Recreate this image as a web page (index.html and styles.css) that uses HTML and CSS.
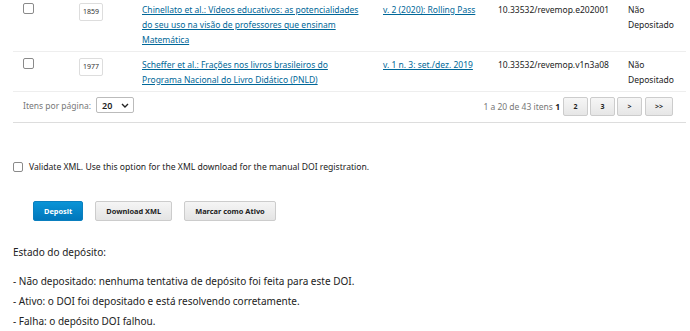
FILE: index.html
```html
<!DOCTYPE html>
<html lang="pt-BR">
<head>
    <meta charset="UTF-8">
    <meta name="viewport" content="width=device-width, initial-scale=1.0">
    <title>DOI</title>
    <link rel="stylesheet" href="styles.css">
</head>
<body>

    <div class="panel">
        <!-- Submissions list -->
        <table class="doi-table">
            <colgroup>
                <col class="c-check">
                <col class="c-id">
                <col class="c-title">
                <col class="c-issue">
                <col class="c-doi">
                <col class="c-status">
            </colgroup>
            <tbody>
                <tr>
                    <td><span class="box"></span></td>
                    <td><span class="sub-id">1859</span></td>
                    <td><a href="#">Chinellato et al.: Vídeos educativos: as potencialidades do seu uso na visão de professores que ensinam Matemática</a></td>
                    <td><a href="#">v. 2 (2020): Rolling Pass</a></td>
                    <td>10.33532/revemop.e202001</td>
                    <td>Não Depositado</td>
                </tr>
                <tr>
                    <td><span class="box"></span></td>
                    <td><span class="sub-id">1977</span></td>
                    <td><a href="#">Scheffer et al.: Frações nos livros brasileiros do Programa Nacional do Livro Didático (PNLD)</a></td>
                    <td><a href="#">v. 1 n. 3: set./dez. 2019</a></td>
                    <td>10.33532/revemop.v1n3a08</td>
                    <td>Não Depositado</td>
                </tr>
            </tbody>
        </table>

        <div class="list-footer">
            <div class="per-page">
                <span>Itens por página:</span>
                <span class="select">20 <svg width="8" height="5" viewBox="0 0 8 5"><path d="M1 1l3 3 3-3" fill="none" stroke="#222" stroke-width="1.4"/></svg></span>
            </div>
            <div class="pager">
                <span class="count">1 a 20 de 43 itens <b>1</b></span>
                <span class="pg">2</span>
                <span class="pg">3</span>
                <span class="pg">&gt;</span>
                <span class="pg">&gt;&gt;</span>
            </div>
        </div>
    </div>

    <!-- XML validation -->
    <label class="validate"><span class="box"></span> Validate XML. Use this option for the XML download for the manual DOI registration.</label>

    <div class="actions">
        <button class="btn primary">Deposit</button>
        <button class="btn">Download XML</button>
        <button class="btn">Marcar como Ativo</button>
    </div>

    <div class="legend">
        <p class="legend-title">Estado do depósito:</p>
        <p>- Não depositado: nenhuma tentativa de depósito foi feita para este DOI.</p>
        <p>- Ativo: o DOI foi depositado e está resolvendo corretamente.</p>
        <p>- Falha: o depósito DOI falhou.</p>
    </div>

</body>
</html>
```

FILE: styles.css
```css
* {
    margin: 0;
    padding: 0;
    box-sizing: border-box;
}

body {
    font-family: 'Noto Sans', sans-serif;
    font-size: 10px;
    color: #222;
    background: #fff;
    padding: 0 4px 0 13px;
    overflow: hidden;
}

.panel {
    margin-top: -3px;
    border-bottom: 1px solid #ddd;
}

.doi-table {
    width: 100%;
    border-collapse: collapse;
    table-layout: fixed;
    font-size: 8.5px;
}

.c-check { width: 56px; }
.c-id { width: 63px; }
.c-title { width: 241px; }
.c-issue { width: 115px; }
.c-doi { width: 130px; }

.doi-table td {
    vertical-align: top;
    padding: 5px 6px 4px 10px;
    line-height: 15px;
    border-bottom: 1px solid #eee;
}

.doi-table a {
    color: #006798;
}

.box {
    display: inline-block;
    width: 11px;
    height: 11px;
    border: 1px solid #8a8a8a;
    border-radius: 2px;
    background: #fff;
    vertical-align: top;
}

.doi-table .box {
    margin: 1px 0 0 0;
}

.sub-id {
    display: inline-block;
    margin-top: 1px;
    width: 24px;
    height: 18px;
    line-height: 16px;
    border: 1px solid #ddd;
    border-radius: 2px;
    font-size: 7px;
    text-align: center;
    color: #333;
}

.list-footer {
    display: flex;
    justify-content: space-between;
    align-items: flex-start;
    height: 30px;
    padding: 5px 13px 0 10px;
    font-size: 8.5px;
}

.per-page {
    display: flex;
    align-items: center;
    gap: 5px;
    height: 16px;
    color: #777;
}

.select {
    display: flex;
    align-items: center;
    gap: 9px;
    height: 16px;
    padding: 0 4px 0 5px;
    border: 1px solid #bbb;
    border-radius: 2px;
    color: #222;
    font-weight: 600;
    font-size: 9px;
}

.pager {
    display: flex;
    align-items: center;
    gap: 2px;
}

.count {
    color: #777;
    margin-right: 1px;
}

.count b {
    color: #222;
}

.pg {
    width: 25px;
    height: 19px;
    line-height: 17px;
    text-align: center;
    font-size: 7px;
    font-weight: 700;
    border: 1px solid #ccc;
    border-radius: 2px;
    background: linear-gradient(#f6f6f6, #e6e6e6);
    color: #222;
}

.pg:last-child {
    width: 28px;
    margin-left: 1px;
}

.validate {
    display: flex;
    align-items: center;
    gap: 6px;
    margin-top: 38px;
    font-size: 8.6px;
    color: #222;
}

.validate .box {
    width: 10px;
    height: 10px;
}

.actions {
    display: flex;
    gap: 12px;
    margin-top: 28px;
    padding-left: 20px;
}

.btn {
    height: 20px;
    padding: 0 10px;
    border: 1px solid #ccc;
    border-radius: 2px;
    background: linear-gradient(#f5f5f5, #e4e4e4);
    font-family: 'Noto Sans', sans-serif;
    font-size: 7.4px;
    font-weight: 700;
    color: #222;
}

.btn.primary {
    background: linear-gradient(#0a94d6, #0077bb);
    border-color: #0a7fbf;
    color: #fff;
}

.legend {
    margin-top: 21px;
    font-size: 10px;
    line-height: 20px;
}

.legend-title {
    margin-bottom: 9px;
}
```
